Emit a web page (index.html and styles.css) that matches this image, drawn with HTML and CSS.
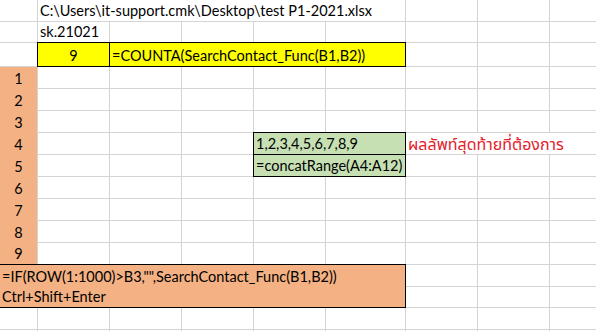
FILE: index.html
```html
<!DOCTYPE html>
<html lang="th">
<head>
<meta charset="utf-8">
<title>test P1-2021.xlsx</title>
<link rel="stylesheet" href="styles.css">
</head>
<body>
<div class="sheet">
  <div class="cell path">C:\Users\it-support.cmk\Desktop\test P1-2021.xlsx</div>
  <div class="cell sk">sk.21021</div>
  <div class="cell yellow count">9</div>
  <div class="cell yellow formula">=COUNTA(SearchContact_Func(B1,B2))</div>
  <div class="rownums">
    <span>1</span><span>2</span><span>3</span><span>4</span><span>5</span><span>6</span><span>7</span><span>8</span><span>9</span>
  </div>
  <div class="cell green result">1,2,3,4,5,6,7,8,9</div>
  <div class="cell note">ผลลัพท์สุดท้ายที่ต้องการ</div>
  <div class="cell green concat">=concatRange(A4:A12)</div>
  <div class="orange-block">
    <span>=IF(ROW(1:1000)&gt;B3,"",SearchContact_Func(B1,B2))</span>
    <span>Ctrl+Shift+Enter</span>
  </div>

  <!-- row 0 -->
  <i></i><i></i><i></i><i></i>
  <!-- row 1 -->
  <i></i><i></i><i></i><i></i><i></i><i></i><i></i><i></i>
  <!-- row 2 -->
  <i></i><i></i><i></i><i></i>
  <!-- rows 3-5 -->
  <i></i><i></i><i></i><i></i><i></i><i></i><i></i><i></i>
  <i></i><i></i><i></i><i></i><i></i><i></i><i></i><i></i>
  <i></i><i></i><i></i><i></i><i></i><i></i><i></i><i></i>
  <!-- row 6 -->
  <i></i><i></i><i></i>
  <!-- row 7 -->
  <i></i><i></i><i></i><i></i><i></i><i></i>
  <!-- rows 8-11 -->
  <i></i><i></i><i></i><i></i><i></i><i></i><i></i><i></i>
  <i></i><i></i><i></i><i></i><i></i><i></i><i></i><i></i>
  <i></i><i></i><i></i><i></i><i></i><i></i><i></i><i></i>
  <i></i><i></i><i></i><i></i><i></i><i></i><i></i><i></i>
  <!-- rows 12-13 -->
  <i></i><i></i><i></i>
  <i></i><i></i><i></i>
  <!-- rows 14-15 -->
  <i></i><i></i><i></i><i></i><i></i><i></i><i></i><i></i><i></i>
  <i></i><i></i><i></i><i></i><i></i><i></i><i></i><i></i><i></i>
</div>
</body>
</html>
```
FILE: styles.css
```css
html, body {
  margin: 0;
  padding: 0;
  background: #fff;
  overflow: hidden;
}

body {
  font-family: Lato, "Noto Sans Thai", "Noto Sans", sans-serif;
  font-size: 14.5px;
  color: #000;
}

.sheet {
  display: grid;
  grid-template-columns: 37px 71px 71px 71px 71px 79px 71px 71px 71px;
  grid-template-rows: 21px 20px 23px repeat(10, 21px) 20px 21px 1px;
  gap: 1px;
  background: #d4d4d4;
  width: max-content;
}

.sheet i {
  display: block;
  background: #fff;
}

.cell {
  background: #fff;
  display: flex;
  align-items: flex-end;
  padding: 0 2px 2px;
  line-height: 16px;
  white-space: nowrap;
  min-width: 0;
}

.path { grid-column: 2 / span 5; grid-row: 1; }
.sk { grid-column: 2; grid-row: 2; }

.yellow {
  background: #ffff00;
  outline: 1px solid #000;
  z-index: 1;
}
.count { grid-column: 2; grid-row: 3; justify-content: center; }
.formula { grid-column: 3 / span 4; grid-row: 3; }

.rownums {
  grid-column: 1;
  grid-row: 4 / span 9;
  background: #f4b183;
  display: grid;
  grid-template-rows: repeat(8, 22px) 21px;
}
.rownums span {
  display: flex;
  align-items: flex-end;
  justify-content: center;
  padding-bottom: 2px;
  line-height: 16px;
}

.green {
  background: #c6e0b4;
  outline: 1px solid #000;
  z-index: 1;
}
.result { grid-column: 5 / span 2; grid-row: 7; }
.concat { grid-column: 5 / span 2; grid-row: 8; }

.note {
  grid-column: 7 / span 3;
  grid-row: 7;
  color: #e3222a;
  font-size: 16px;
  line-height: 18px;
  padding-bottom: 1px;
}

.orange-block {
  grid-column: 1 / span 6;
  grid-row: 13 / span 2;
  background: #f4b183;
  outline: 1px solid #000;
  z-index: 1;
  display: grid;
  grid-template-rows: 22px 20px;
}
.orange-block span {
  display: flex;
  align-items: flex-end;
  padding: 0 2px 2px;
  line-height: 16px;
  white-space: nowrap;
}
```
